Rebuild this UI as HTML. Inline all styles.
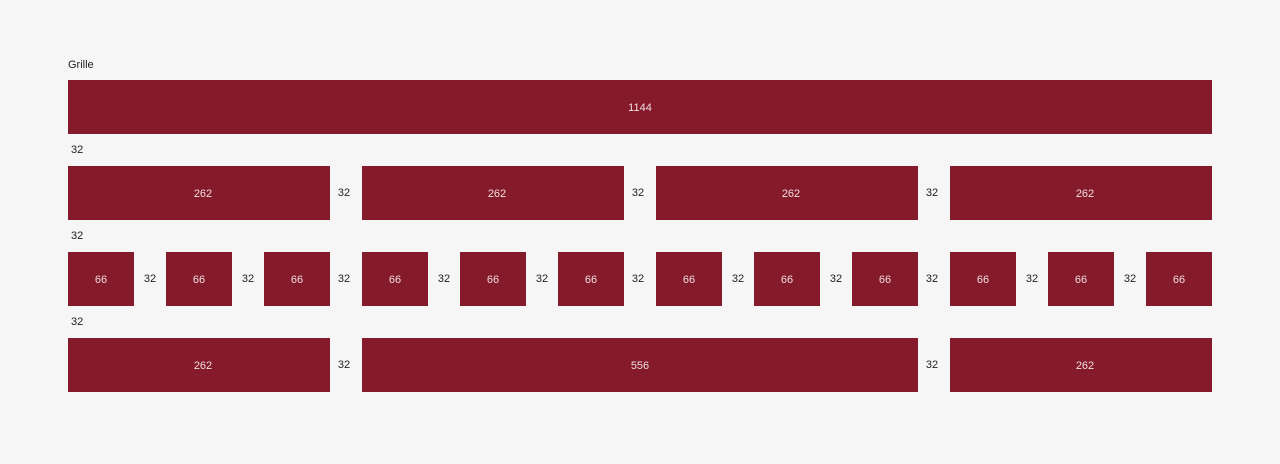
<!DOCTYPE html>
<html><head><style>
body{margin:0;width:1280px;height:464px;background:#f6f6f6;font-family:"Liberation Sans",sans-serif;position:relative;overflow:hidden}
.b{position:absolute;background:#841a2a;color:#f1dfe1;font-size:11px;display:flex;align-items:center;justify-content:center;height:54px;box-sizing:border-box;padding-top:1px}
.w{padding-left:8px}
.l{position:absolute;font-size:11px;color:#222;width:28px;text-align:center}
.v{position:absolute;font-size:11px;color:#222;left:71px}
</style></head><body>
<div style="position:absolute;left:68px;top:59px;font-size:11px;color:#222">Grille</div>
<div class="b" style="left:68px;top:80px;width:1144px">1144</div>
<div class="v" style="top:144px">32</div>
<div class="b w" style="left:68px;top:166px;width:262px">262</div>
<div class="l" style="left:330px;top:187px">32</div>
<div class="b w" style="left:362px;top:166px;width:262px">262</div>
<div class="l" style="left:624px;top:187px">32</div>
<div class="b w" style="left:656px;top:166px;width:262px">262</div>
<div class="l" style="left:918px;top:187px">32</div>
<div class="b w" style="left:950px;top:166px;width:262px">262</div>
<div class="v" style="top:230px">32</div>
<div class="b" style="left:68px;top:252px;width:66px">66</div>
<div class="l" style="left:136px;top:273px">32</div>
<div class="b" style="left:166px;top:252px;width:66px">66</div>
<div class="l" style="left:234px;top:273px">32</div>
<div class="b" style="left:264px;top:252px;width:66px">66</div>
<div class="l" style="left:330px;top:273px">32</div>
<div class="b" style="left:362px;top:252px;width:66px">66</div>
<div class="l" style="left:430px;top:273px">32</div>
<div class="b" style="left:460px;top:252px;width:66px">66</div>
<div class="l" style="left:528px;top:273px">32</div>
<div class="b" style="left:558px;top:252px;width:66px">66</div>
<div class="l" style="left:624px;top:273px">32</div>
<div class="b" style="left:656px;top:252px;width:66px">66</div>
<div class="l" style="left:724px;top:273px">32</div>
<div class="b" style="left:754px;top:252px;width:66px">66</div>
<div class="l" style="left:822px;top:273px">32</div>
<div class="b" style="left:852px;top:252px;width:66px">66</div>
<div class="l" style="left:918px;top:273px">32</div>
<div class="b" style="left:950px;top:252px;width:66px">66</div>
<div class="l" style="left:1018px;top:273px">32</div>
<div class="b" style="left:1048px;top:252px;width:66px">66</div>
<div class="l" style="left:1116px;top:273px">32</div>
<div class="b" style="left:1146px;top:252px;width:66px">66</div>
<div class="v" style="top:316px">32</div>
<div class="b w" style="left:68px;top:338px;width:262px">262</div>
<div class="l" style="left:330px;top:359px">32</div>
<div class="b" style="left:362px;top:338px;width:556px">556</div>
<div class="l" style="left:918px;top:359px">32</div>
<div class="b w" style="left:950px;top:338px;width:262px">262</div>
</body></html>
